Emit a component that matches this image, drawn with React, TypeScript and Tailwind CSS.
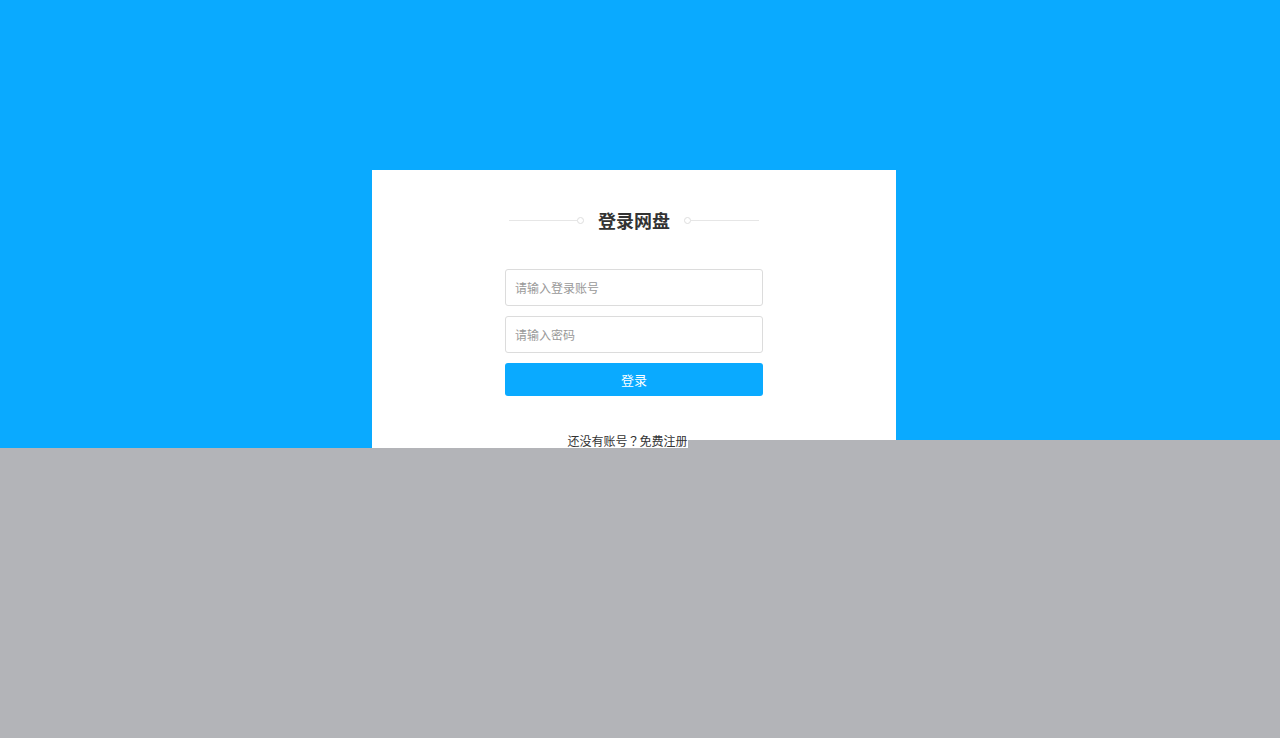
import React from 'react';

const font = { fontFamily: '"Noto Sans CJK SC", "Noto Sans", sans-serif' };

function TitleRule({ side }: { side: 'left' | 'right' }) {
  return (
    <div className={`flex items-center ${side === 'left' ? '' : 'flex-row-reverse'}`}>
      <div className="w-[68px] h-px bg-[#e6e6e6]" />
      <div className="w-[7px] h-[7px] rounded-full border border-[#dedede] bg-white" />
    </div>
  );
}

export default function App() {
  return (
    <div className="relative w-full h-[738px] bg-[#b3b4b8] overflow-hidden" style={font}>
      <section className="h-[448px] bg-[#0aaaff] pt-[170px] pr-[12px] overflow-hidden">
        <div className="w-[524px] h-[400px] mx-auto bg-white pt-[38px]">
          <div className="w-[258px] mx-auto">
            <div className="flex items-center justify-center gap-[13px] h-[24px]">
              <TitleRule side="left" />
              <h1 className="text-[18px] leading-[24px] font-bold text-[#333] px-[1px]">登录网盘</h1>
              <TitleRule side="right" />
            </div>

            <form className="mt-[37px] flex flex-col gap-[10px]" onSubmit={(e) => e.preventDefault()}>
              <input
                type="text"
                placeholder="请输入登录账号"
                className="h-[37px] w-full rounded-[3px] border border-[#dcdcdc] px-[9px] text-[12px] text-[#333] placeholder:text-[#999] outline-none"
              />
              <input
                type="password"
                placeholder="请输入密码"
                className="h-[37px] w-full rounded-[3px] border border-[#dcdcdc] px-[9px] text-[12px] text-[#333] placeholder:text-[#999] outline-none"
              />
              <button
                type="submit"
                className="h-[33px] w-full rounded-[3px] bg-[#0aaaff] text-[13px] text-white"
              >
                登录
              </button>
            </form>

            <p className="mt-[35px] text-center text-[12px] leading-[20px] text-[#333]">
              还没有账号<span style={{ fontFamily: '"Noto Sans CJK TC", sans-serif' }}>？</span>
              <a href="#" className="text-[#333]">免费注册</a>
              <span className="inline-block w-[13px] pl-[3px] text-left text-[#c8c8c8]">»</span>
            </p>
          </div>
        </div>
      </section>

      {/* grey sheet laid over the lower page */}
      <div className="absolute left-[688px] right-0 top-[440px] bottom-0 bg-[#b3b4b8]" />
    </div>
  );
}
